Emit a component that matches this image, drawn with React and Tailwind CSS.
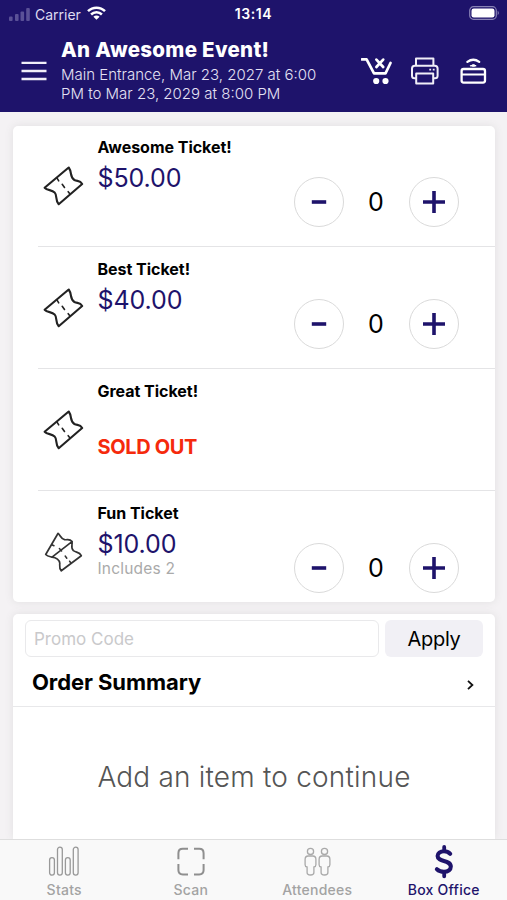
const tickets = [
  { name: "Awesome Ticket!", price: "$50.00" },
  { name: "Best Ticket!", price: "$40.00" },
  { name: "Great Ticket!", soldOut: true },
  { name: "Fun Ticket", price: "$10.00", note: "Includes 2", pair: true },
];

function TicketIcon() {
  return (
    <svg className="size-[42px]" viewBox="0 0 42 42" fill="none" stroke="#222" strokeWidth="2.1" strokeLinecap="round" strokeLinejoin="round">
      <path d="M26.7 2.5 L2.6 22.7 C5.2 25.6 9.8 24.6 12.6 27.4 C15.6 30.6 12.9 35.2 16.7 39.2 L40.2 19 C38 15 35.4 16.6 32.4 15 C27.4 12 30.4 7.4 26.7 2.5Z" />
      <path d="M15.2 13.4 l1.5 2.4 M20.2 19.3 l2.3 3.2 M26.2 26.7 l1.4 1.8" strokeWidth="1.6" />
    </svg>
  );
}

function TicketPairIcon() {
  return (
    <svg className="size-[42px]" viewBox="0 0 42 42" fill="none" stroke="#333" strokeWidth="1.7" strokeLinecap="round" strokeLinejoin="round">
      <path d="M30 10.6 L10 26.1 C14.2 26.4 17.7 29 17.8 32.3 C17.7 35 16.9 37.4 19.3 39.8 L39.3 24.7 C37.4 20.4 34.2 21.8 31.4 19.6 C28.2 16.4 30.8 13.6 30 10.6Z" />
      <path d="M30 10.6 C27.6 7.4 25 9.3 22.6 8.6 C18.3 7.2 18.4 4.2 16.1 2.3 L3.7 23.5 C5.7 25.6 7.7 25.5 10 26.1" />
      <path d="M9.8 13.8 l2.2 1 M17.4 17.6 l2.2 2.4 M23.2 25 l1.6 2.2 M27.6 30.2 l1.2 1.6" strokeWidth="1.5" />
    </svg>
  );
}

function RoundButton({ plus }) {
  return (
    <button className="flex size-[50px] items-center justify-center rounded-full border border-[#dadada]">
      <svg className="size-6" viewBox="0 0 24 24" stroke="#1e136b" strokeWidth="3.6">
        {plus ? <path d="M1 12h22M12 1v22" /> : <path d="M4.8 12h14.4" />}
      </svg>
    </button>
  );
}

function TicketRow({ ticket, last }) {
  return (
    <li className={`ml-[25px] flex ${last ? "h-[111px]" : "h-[122px] border-b border-[#e4e4e6]"}`}>
      <div className={`mt-10 shrink-0 ${ticket.pair ? "ml-1 w-[55.5px]" : "ml-[3.5px] w-14"}`}>{ticket.pair ? <TicketPairIcon /> : <TicketIcon />}</div>
      <div className="flex-1 whitespace-nowrap">
        <h3 className="mt-3 text-[16px] font-bold leading-5 tracking-[-0.03px] text-black">{ticket.name}</h3>
        {ticket.soldOut ? (
          <p className="mt-[34px] text-[20px] font-bold leading-6 tracking-[-0.35px] text-[#f52a0c]">SOLD OUT</p>
        ) : (
          <p className="mt-[6px] text-[25px] leading-[30px] tracking-[-0.1px] text-[#1e136b]">{ticket.price}</p>
        )}
        {ticket.note && <p className="text-[15.5px] leading-5 tracking-[0.2px] text-[#aaa]">{ticket.note}</p>}
      </div>
      {!ticket.soldOut && (
        <div className="mr-[36.5px] mt-[52px] flex h-[50px] items-center">
          <RoundButton />
          <span className="w-[65px] text-center text-[25px] leading-none text-black">0</span>
          <RoundButton plus />
        </div>
      )}
    </li>
  );
}

function StatusBar() {
  return (
    <div className="grid h-7 grid-cols-3 items-center pl-[7px] pr-[7px] text-[14px] text-white">
      <div className="ml-[2px] flex items-center">
        <svg className="h-[13px] w-[22px]" viewBox="0 0 22 13" fill="#5a5197">
          <rect x="0" y="8.5" width="3.6" height="4.5" rx="1" />
          <rect x="6" y="6" width="3.6" height="7" rx="1" />
          <rect x="11.5" y="3.5" width="3.6" height="9.5" rx="1" />
          <rect x="17.2" y="0" width="3.6" height="13" rx="1" />
        </svg>
        <span className="ml-[4px] text-[#dedbf0]">Carrier</span>
        <svg className="ml-[6px] -mt-[2px] h-[14px] w-[19px]" viewBox="0 0 19 14" fill="none" stroke="white" strokeWidth="2.5">
          <path d="M1 5.2 A12 12 0 0 1 18 5.2" />
          <path d="M4.1 8.5 A7.6 7.6 0 0 1 14.9 8.5" />
          <path d="M9.5 13.8 L6.4 10.7 A4.4 4.4 0 0 1 12.6 10.7Z" fill="white" stroke="none" />
        </svg>
      </div>
      <span className="-mt-[2px] text-center font-semibold tracking-[0.6px]">13:14</span>
      <svg className="-mt-[2px] h-[14px] w-[31px] justify-self-end" viewBox="0 0 31 14">
        <rect x=".7" y=".7" width="26.6" height="12.6" rx="3.8" fill="none" stroke="#8882b5" strokeWidth="1.2" />
        <rect x="2.5" y="2.5" width="23" height="9" rx="2.2" fill="white" />
        <path d="M28.7 4.8 Q31 7 28.7 9.2Z" fill="#8882b5" />
      </svg>
    </div>
  );
}

function Header() {
  return (
    <header className="h-28 shrink-0 bg-[#1e136b]">
      <StatusBar />
      <div className="flex pl-[21px] pr-[20px]">
        <svg className="mt-[33px] h-5 w-[26px]" viewBox="0 0 26 20" stroke="#f0eef8" strokeWidth="2.3">
          <path d="M0.5 1.8h25M0.5 10h25M0.5 18h25" />
        </svg>
        <div className="ml-[14px] mt-[9px] flex-1 whitespace-nowrap text-white">
          <h1 className="text-[20.5px] font-extrabold leading-[26px] tracking-[0.31px]">An Awesome Event!</h1>
          <p className="mt-[3px] text-[15px] font-light leading-[18.5px] text-[#e4e1f4]">
            Main Entrance, Mar 23, 2027 at 6:00
            <br />
            PM to Mar 23, 2029 at 8:00 PM
          </p>
        </div>
        <div className="mt-[29px] flex h-7 items-start">
          <svg className="h-7 w-8" viewBox="0 0 32 28" fill="none" stroke="white" strokeWidth="2.7" strokeLinecap="round" strokeLinejoin="round">
            <path d="M.9 2.3 H5.6 L13 16.3 H24.5 L29.5 6" />
            <path d="M15.4 2.6 l6.8 7.4 M22.2 2.6 l-6.8 7.4" />
            <circle cx="15.2" cy="24" r="3.1" fill="white" stroke="none" />
            <circle cx="24.5" cy="24" r="3.1" fill="white" stroke="none" />
          </svg>
          <svg className="ml-[18px] h-7 w-7" viewBox="0 0 28 28" fill="none" stroke="#f0eef8" strokeWidth="2" strokeLinejoin="round">
            <path d="M5 8.5 V1.5 H22.4 V8.5" />
            <path d="M5 21.3 H3.5 Q1 21.3 1 18.8 V11.5 Q1 8.7 3.8 8.7 H23.8 Q26.6 8.7 26.6 11.5 V18.8 Q26.6 21.3 24 21.3 H22" />
            <path d="M5.2 16.6 H22.2 V26.6 H5.2Z" />
            <path d="M18.3 12.6 h1.8 M21.8 12.6 h1.8" strokeWidth="1.9" />
          </svg>
          <svg className="ml-[21px] h-7 w-[27px]" viewBox="0 0 27 28" fill="none" stroke="white" strokeWidth="2.3" strokeLinecap="round">
            <rect x="1.6" y="12" width="23.4" height="13.6" rx="2" />
            <path d="M2 17.5h23" strokeWidth="2.2" />
            <path d="M7.4 4.9 Q13.3 .6 19.2 4.9" />
            <path d="M10.6 8.8 Q13.4 6.3 16.2 8.8 Q13.4 10 10.6 8.8Z" fill="white" strokeWidth="1" />
          </svg>
        </div>
      </div>
    </header>
  );
}

function StatsIcon() {
  return (
    <svg className="h-[34px] w-[32px]" viewBox="0 0 32 34" fill="none" stroke="#999" strokeWidth="1.3">
      <rect x="1.6" y="12.6" width="4.8" height="17.6" rx="2.4" />
      <rect x="9.5" y="2.2" width="4.8" height="28" rx="2.4" />
      <rect x="17.4" y="12.6" width="4.8" height="17.6" rx="2.4" />
      <rect x="25.3" y="2.2" width="4.8" height="28" rx="2.4" />
    </svg>
  );
}

function ScanIcon() {
  return (
    <svg className="h-[34px] w-[30px]" viewBox="0 0 30 34" fill="none" stroke="#8f8f8f" strokeWidth="2">
      <path d="M2.4 14.2 V8.2 Q2.4 3.8 6.8 3.8 H12 M18 3.8 H23.2 Q27.6 3.8 27.6 8.2 V14.2 M27.6 19 V25 Q27.6 29.4 23.2 29.4 H18 M12 29.4 H6.8 Q2.4 29.4 2.4 25 V19" />
    </svg>
  );
}

function Person() {
  return (
    <svg className="h-[34px] w-[13px]" viewBox="0 0 13 34" fill="none" stroke="#a9a9a9" strokeWidth="1.3">
      <circle cx="6.5" cy="6.4" r="3.1" />
      <path d="M4.2 11 H8.8 Q11.9 11 11.9 14.4 V19.7 Q11.9 21.7 9.9 22 V27.5 Q9.9 30 6.5 30 Q3.1 30 3.1 27.5 V22 Q1.1 21.7 1.1 19.7 V14.4 Q1.1 11 4.2 11Z" />
    </svg>
  );
}

function DollarIcon() {
  return (
    <svg className="h-[34px] w-5" viewBox="0 0 20 34" fill="none" stroke="#1e136b" strokeWidth="4.1" strokeLinecap="round">
      <path d="M16.2 8.8 C14.5 6.9 12.5 6.2 10 6.2 C6.2 6.2 3.6 8.2 3.6 11 C3.6 17.6 16.8 14.2 16.8 21.6 C16.8 24.7 14.2 26.8 10 26.8 C7 26.8 4.8 26 2.9 24.2" />
      <path d="M10.2 2 V5 M10.2 28 V31.3" strokeWidth="3.8" />
    </svg>
  );
}

function Tab({ icon, label, active }) {
  return (
    <div className={`flex w-[126.5px] flex-col items-center text-[14px] font-medium leading-[17px] tracking-[0.25px] ${active ? "text-[#1e136b]" : "text-[#a3a3a3]"}`}>
      <div className="mt-[5px] flex gap-[1.5px]">{icon}</div>
      <span className="mt-[2px]">{label}</span>
    </div>
  );
}

export default function App() {
  return (
    <div className="flex h-[900px] w-[507px] flex-col overflow-hidden bg-[#f4f2f4] font-['Inter',sans-serif]">
      <Header />
      <main className="flex min-h-0 flex-1 flex-col pl-[13px] pt-[14px] pr-[12px]">
        <section className="h-[476px] shrink-0 rounded-[5px] bg-white shadow-[0_0_8px_#e0dfe0]">
          <ul className="-mt-px">
            {tickets.map((t, i) => (
              <TicketRow key={t.name} ticket={t} last={i === tickets.length - 1} />
            ))}
          </ul>
        </section>
        <section className="mt-3 flex-1 rounded-t-[5px] bg-white shadow-[0_0_8px_#e0dfe0]">
          <div className="flex h-[43px] gap-[6px] pl-3 pr-3 pt-[6px]">
            <div className="flex flex-1 items-center rounded-[6px] border border-[#e9e9eb] pl-2 pt-[2px] text-[17px] text-[#c9c9cb]">Promo Code</div>
            <button className="w-[98px] rounded-[6px] bg-[#f1f0f5] text-[20px] tracking-[-0.3px] text-black">Apply</button>
          </div>
          <div className="flex h-[50px] items-center justify-between border-b border-[#e8e8ea] pl-[19px] pr-[21px]">
            <h2 className="text-[22px] font-bold leading-none tracking-[-0.08px] text-black">Order Summary</h2>
            <svg className="mt-[6px] h-[10px] w-[7px]" viewBox="0 0 7 10" fill="none" stroke="#111" strokeWidth="1.8">
              <path d="M1 .8 L5.4 5 L1 9.2" />
            </svg>
          </div>
          <p className="mt-[52px] text-center text-[28px] font-light leading-9 tracking-[0.2px] text-[#555]">Add an item to continue</p>
        </section>
      </main>
      <nav className="flex h-[61px] shrink-0 border-t border-[#dedede] bg-[#f9f9f9] pl-px">
        <Tab icon={<StatsIcon />} label="Stats" />
        <Tab icon={<ScanIcon />} label="Scan" />
        <Tab icon={<><Person /><Person /></>} label="Attendees" />
        <Tab icon={<DollarIcon />} label="Box Office" active />
      </nav>
    </div>
  );
}
